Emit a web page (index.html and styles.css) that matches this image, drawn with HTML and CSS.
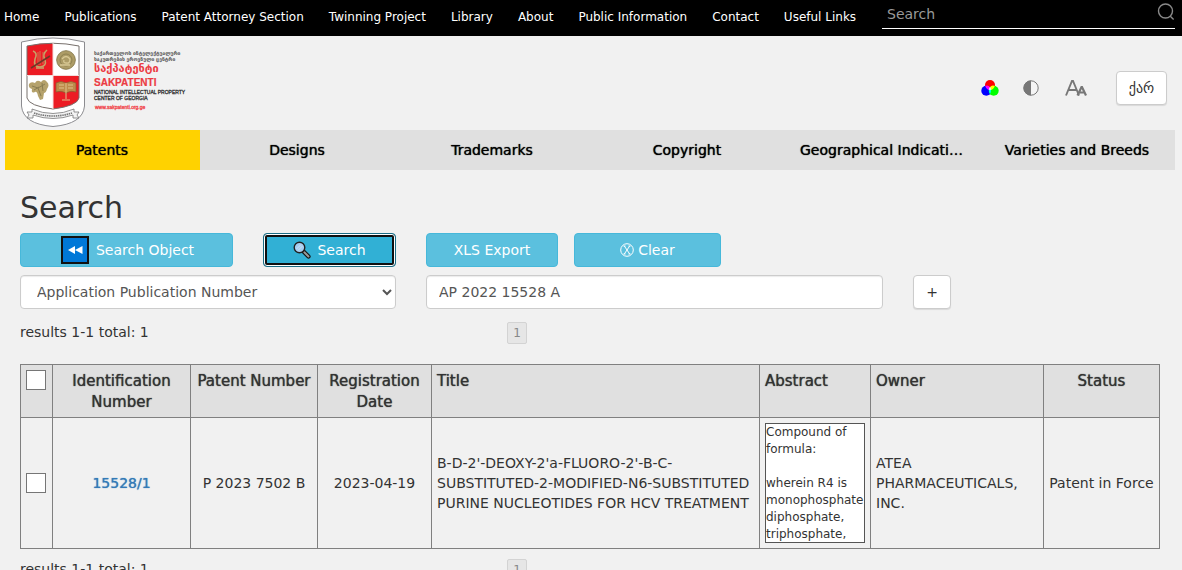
FILE: index.html
```html
<!DOCTYPE html>
<html lang="en">

<head>
    <meta charset="UTF-8">
    <title>Sakpatenti - Search</title>
    <link rel="stylesheet" href="styles.css">
</head>

<body>
    <!-- top menu -->
    <div class="top_bar">
        <nav class="top_menu">
            <a href="#">Home</a>
            <a href="#">Publications</a>
            <a href="#">Patent Attorney Section</a>
            <a href="#">Twinning Project</a>
            <a href="#">Library</a>
            <a href="#">About</a>
            <a href="#">Public Information</a>
            <a href="#">Contact</a>
            <a href="#">Useful Links</a>
        </nav>
        <form class="top_search">
            <input type="text" placeholder="Search" aria-label="Site search">
            <button type="button" aria-label="Go">
                <svg width="18" height="18" viewBox="0 0 18 18" fill="none" stroke="#8a8a8a" stroke-width="1.4">
                    <circle cx="8.5" cy="8" r="7" />
                    <path d="M13.3 13.2L16.6 16.4" />
                </svg>
            </button>
        </form>
    </div>

    <div class="container">
        <!-- logo and tools -->
        <header class="header">
            <a class="logo" href="#" aria-label="Sakpatenti">
                <svg width="180" height="92" viewBox="0 0 180 92">
                    <path d="M1.5 6Q33 -2 64.5 6V70Q63 88 33 90.5Q3 88 1.5 70Z" fill="#fff" stroke="#8c8c90" stroke-width="1" />
                    <path d="M7 10Q20 7 33 7V39.5H7Z" fill="#ec1c24" />
                    <path d="M33 39.5H59V62Q57 70 33 73Z" fill="#ec1c24" />
                    <path d="M7 10Q33 4.5 59 10V62Q57 70 33 73Q9 70 7 62Z" fill="none" stroke="#77706c" stroke-width="1" />
                    <path d="M33 7V73M7 39.5H59" stroke="#f4dddc" stroke-width="1" />
                    <!-- lyre -->
                    <g fill="none" stroke="#c6a267" stroke-width="1.6">
                        <path d="M13 15Q18 17 15 23Q13 31 20 31Q27 30 25 24Q22 18 27 14" />
                        <path d="M18 16V29M20 15V29M23 16V28" stroke-width=".7" />
                        <path d="M16 32H24" />
                        <path d="M11 32L30 20" stroke="#6e3828" stroke-width="1.5" />
                    </g>
                    <!-- coin -->
                    <circle cx="46" cy="24" r="9.3" fill="#ad9c66" stroke="#8d8053" />
                    <circle cx="46" cy="24" r="6" fill="none" stroke="#8f8252" />
                    <path d="M42 23Q46 18 50 23Q50 28 46 27Q43 27 44 24M40 29H50" fill="none" stroke="#d9c995" stroke-width="1.3" />
                    <!-- vine -->
                    <path d="M9 48Q11 45 15 47Q17 43 21 46Q24 42 27 46Q30 49 27 53Q26 57 24 57L23 63L20 64L18 60Q17 55 15 56Q11 58 12 53Q8 52 9 48Z" fill="#b5a26c" />
                    <path d="M12 50L18 52L25 48M18 52L21 60M14 54L19 51M22 47L23 55" fill="none" stroke="#8a7d52" />
                    <!-- book stand -->
                    <path d="M36 47Q41 44 46 47Q51 44 56 47V56Q51 54 46 57Q41 54 36 56Z" fill="#bd8b4b" stroke="#8b5b30" stroke-width=".7" />
                    <path d="M46 47V63M42 64H50M39 49H44M39 52H44M48 49H53M48 52H53" stroke="#dfc28b" fill="none" />
                    <!-- ribbon -->
                    <path d="M7 76L12 76V73Q33 82 54 73V76L59 76L57 79L59 82H53V79Q33 86 13 79V82H7L9 79Z" fill="#f3f3f3" stroke="#777" stroke-width=".8" />
                    <path d="M14 77Q33 83 52 77" fill="none" stroke="#777" stroke-width="1.6" stroke-dasharray="1.5 .7" />
                    <g class="logo_small">
                        <text x="74" y="19">საქართველოს ინტელექტუალური</text>
                        <text x="74" y="25">საკუთრების ეროვნული ცენტრი</text>
                    </g>
                    <text class="logo_geo" x="74" y="36">საქპატენტი</text>
                    <text class="logo_name" x="74" y="50">SAKPATENTI</text>
                    <g class="logo_sub">
                        <text x="74" y="58">NATIONAL INTELLECTUAL PROPERTY</text>
                        <text x="74" y="64">CENTER OF GEORGIA</text>
                    </g>
                    <text class="logo_url" x="75" y="73">www.sakpatenti.org.ge</text>
                </svg>
            </a>
            <div class="tools">
                <button type="button" class="tool" aria-label="Colours">
                    <svg width="18" height="16" viewBox="0 0 18 16">
                        <circle cx="9" cy="5" r="5" fill="#f00" />
                        <circle cx="5.3" cy="10.7" r="5" fill="#00f" />
                        <circle cx="12.7" cy="10.7" r="5" fill="#0f0" />
                        <path d="M4.2 5.9Q7.5 4.8 9 7.3Q10 8.5 8.8 10Q5.2 9.5 4.2 5.9Z" fill="#f0f" />
                        <path d="M13.8 5.9Q10.5 4.8 9 7.3Q8 8.5 9.2 10Q12.8 9.5 13.8 5.9Z" fill="#ff0" />
                        <path d="M9 7.3Q11 10.5 9 14Q7 10.5 9 7.3Z" fill="#0ff" />
                        <path d="M9 7L10.3 9.7H7.7Z" fill="#fff" />
                    </svg>
                </button>
                <button type="button" class="tool" aria-label="Contrast">
                    <svg width="16" height="16" viewBox="0 0 16 16">
                        <circle cx="8" cy="8" r="7.2" fill="#f5f5f5" stroke="#777" />
                        <path d="M8 .5A7.5 7.5 0 0 0 8 15.5Z" fill="#777" />
                    </svg>
                </button>
                <button type="button" class="tool" aria-label="Text size">
                    <svg width="22" height="16" viewBox="0 0 22 16" fill="none" stroke="#777">
                        <path d="M1 15.5L7 1H8L14 15.5M3.5 10H11.5" stroke-width="1.9" />
                        <path d="M12.5 15.5L16.5 7H17L21 15.5M14 12.5H19.5" stroke-width="2.2" />
                    </svg>
                </button>
                <button type="button" class="btn btn_default btn_lang">ქარ</button>
            </div>
        </header>

        <nav class="tabs">
            <a class="active" href="#">Patents</a>
            <a href="#">Designs</a>
            <a href="#">Trademarks</a>
            <a href="#">Copyright</a>
            <a href="#">Geographical Indications</a>
            <a href="#">Varieties and Breeds</a>
        </nav>

        <main class="content">
            <h1>Search</h1>
            <form class="search_form">
                <div class="form_left">
                    <button type="button" class="btn btn_info btn_object">
                        <svg width="28" height="28" viewBox="0 0 28 28">
                            <rect x="1" y="1" width="26" height="26" fill="#0078d7" stroke="#111" stroke-width="2" />
                            <path d="M14 10V18L7 14ZM21.5 10V18L14 14Z" fill="#fff" />
                        </svg>
                        Search Object
                    </button>
                    <button type="button" class="btn btn_info btn_search">
                        <svg width="18" height="18" viewBox="0 0 18 18">
                            <path d="M10 10L15.5 15.5" stroke="#111" stroke-width="4.2" stroke-linecap="round" />
                            <path d="M11.3 11.3L15.5 15.5" stroke="#999" stroke-width="2" stroke-linecap="round" />
                            <circle cx="6.5" cy="6.5" r="5.3" fill="#a6cdf0" stroke="#222" stroke-width="1.4" />
                            <path d="M3.5 8L8 3.5M5 9.5L9.5 5" stroke="#cbe2f7" />
                        </svg>
                        Search
                    </button>
                </div>
                <div class="form_mid">
                    <button type="button" class="btn btn_info btn_xls">XLS Export</button>
                    <button type="button" class="btn btn_info btn_clear">
                        <svg width="14" height="14" viewBox="0 0 14 14" fill="none" stroke="#fff">
                            <circle cx="7" cy="7" r="6.3" />
                            <path d="M4.3 3L9.7 11M9.7 3L4.3 11M3.5 3H5.5M8.5 3H10.5M3.5 11H5.5M8.5 11H10.5" />
                        </svg>
                        Clear
                    </button>
                </div>
                <select class="form_control field" aria-label="Field">
                    <option>Application Publication Number</option>
                </select>
                <input class="form_control" type="text" value="AP 2022 15528 A" aria-label="Value">
                <button type="button" class="btn btn_default btn_add" aria-label="Add">+</button>
            </form>

            <div class="results">
                <span>results 1-1 total: 1</span>
                <button type="button" class="page" disabled>1</button>
            </div>

            <table class="list">
                <colgroup>
                    <col class="c_check">
                    <col class="c_id">
                    <col class="c_number">
                    <col class="c_date">
                    <col class="c_title">
                    <col class="c_abstract">
                    <col class="c_owner">
                    <col class="c_status">
                </colgroup>
                <thead>
                    <tr>
                        <th class="check"><input type="checkbox" aria-label="Select all"></th>
                        <th>Identification Number</th>
                        <th>Patent Number</th>
                        <th>Registration Date</th>
                        <th class="left">Title</th>
                        <th class="left">Abstract</th>
                        <th class="left">Owner</th>
                        <th>Status</th>
                    </tr>
                </thead>
                <tbody>
                    <tr>
                        <td class="check"><input type="checkbox" aria-label="Select 15528/1"></td>
                        <td><a href="#">15528/1</a></td>
                        <td>P 2023 7502 B</td>
                        <td>2023-04-19</td>
                        <td class="left">B-D-2'-DEOXY-2'a-FLUORO-2'-B-C-SUBSTITUTED-2-MODIFIED-N6-SUBSTITUTED PURINE NUCLEOTIDES FOR HCV TREATMENT</td>
                        <td class="left">
                            <div class="abstract">Compound of formula:<br><br>wherein R4 is monophosphate, diphosphate, triphosphate,</div>
                        </td>
                        <td class="left">ATEA PHARMACEUTICALS, INC.</td>
                        <td>Patent in Force</td>
                    </tr>
                </tbody>
            </table>

            <div class="results">
                <span>results 1-1 total: 1</span>
                <button type="button" class="page" disabled>1</button>
            </div>
        </main>
    </div>
</body>

</html>
```
FILE: styles.css
```css
* {
    box-sizing: border-box;
}

html {
    overflow: hidden;
}

body {
    margin: 0;
    font-family: "DejaVu Sans", sans-serif;
    font-size: 14px;
    line-height: 20px;
    color: #333;
    background-color: #f1f1f1;
}

a {
    text-decoration: none;
}

button,
input,
select {
    font-family: inherit;
    font-size: 14px;
}

/*top menu*/

.top_bar {
    display: flex;
    justify-content: space-between;
    height: 36px;
    background-color: #000;
}

.top_menu {
    display: flex;
    gap: 25px;
    padding: 7px 4px;
    white-space: nowrap;
}

.top_menu a {
    font-size: 12px;
    color: #fff;
}

.top_search {
    display: flex;
    align-items: center;
    width: 293px;
    height: 29px;
    margin-right: 7px;
    border-bottom: 1px solid #fff;
}

.top_search input {
    flex: 1;
    min-width: 0;
    padding: 0 5px;
    border: 0;
    color: #999;
    background: none;
}

.top_search input::placeholder {
    color: #999;
}

.top_search button {
    display: flex;
    padding: 0 0 4px;
    border: 0;
    background: none;
}

.container {
    max-width: 1170px;
    margin: 0 7px 0 5px;
}

/*header*/

.header {
    display: flex;
    justify-content: space-between;
    height: 94px;
    padding: 0 8px 0 15px;
}

.tools {
    display: flex;
    align-items: center;
    padding-top: 10px;
}

.tool {
    display: flex;
    margin-right: 24px;
    padding: 0;
    border: 0;
    background: none;
}

.tool:nth-child(2) {
    margin-right: 26px;
}

.tool:nth-child(3) {
    margin-right: 29px;
}

.logo_small {
    font-size: 5px;
    font-weight: bold;
    fill: #555;
}

.logo_geo {
    font-size: 11px;
    font-weight: bold;
    fill: #ec3b42;
}

.logo_name {
    font: bold 10px "Liberation Sans", sans-serif;
    fill: #ec3b42;
    stroke: #ec3b42;
    stroke-width: 0.2;
}

.logo_sub {
    font: 5px "Liberation Sans", sans-serif;
    fill: #333;
    stroke: #333;
    stroke-width: 0.3;
}

.logo_url {
    font: 5px "Liberation Sans", sans-serif;
    fill: #f0444b;
    stroke: #f0444b;
    stroke-width: 0.3;
}

/*tabs*/

.tabs {
    display: grid;
    grid-template-columns: repeat(6, 1fr);
    background-color: #e0e0e0;
}

.tabs a {
    padding: 0 16px 0 15px;
    line-height: 40px;
    text-align: center;
    color: #000;
    text-shadow: 0 0 1px #000;
    white-space: nowrap;
    overflow: hidden;
    text-overflow: ellipsis;
}

.tabs .active {
    background-color: #ffd200;
}

/*search form*/

.content {
    padding: 0 15px;
}

h1 {
    margin: 21px 0 8px;
    font-size: 30px;
    font-weight: normal;
    line-height: 34px;
}

.search_form {
    display: grid;
    grid-template-columns: 376fr 457fr 247fr;
    gap: 8px 30px;
    padding-bottom: 3px;
}

.form_left {
    display: flex;
    justify-content: space-between;
}

.form_mid {
    display: flex;
    grid-column: 2 / 4;
    gap: 16px;
}

.btn {
    display: flex;
    align-items: center;
    justify-content: center;
    gap: 6px;
    height: 34px;
    padding: 0 12px;
    border: 1px solid #ccc;
    border-radius: 4px;
}

.btn_default {
    color: #333;
    background-color: #fff;
    box-shadow: 0 1px 1px rgba(0, 0, 0, 0.1);
}

.btn_info {
    color: #fff;
    border-color: #46b8da;
    background-color: #5bc0de;
}

.btn_object {
    width: 213px;
    gap: 7px;
    padding: 0 10px 0 12px;
}

.btn_search {
    width: 133px;
    border-color: #1b6d85;
    background-color: #31b0d5;
    box-shadow: inset 0 0 0 1px #fff, inset 0 0 0 3px #101010;
}

.btn_xls {
    width: 132px;
}

.btn_clear {
    width: 147px;
    gap: 4px;
}

.btn_add {
    justify-self: start;
    width: 38px;
}

.btn_lang {
    width: 51px;
}

.form_control {
    width: 100%;
    height: 34px;
    padding: 0 12px;
    border: 1px solid #ccc;
    border-radius: 4px;
    color: #555;
    background-color: #fff;
    box-shadow: inset 0 1px 1px rgba(0, 0, 0, 0.08);
}

.field {
    padding: 0 0 0 12px;
}

/*results line*/

.results {
    display: grid;
    grid-template-columns: 487px 1fr;
    align-items: center;
    height: 22px;
    margin: 10px 0 20px;
}

.results span {
    padding-bottom: 2px;
}

.page {
    justify-self: start;
    width: 20px;
    height: 22px;
    padding: 0;
    border: 1px solid #d3d3d3;
    border-radius: 2px;
    font-size: 12px;
    color: #888;
    background-color: #e6e6e6;
}

/*table*/

.list {
    width: 100%;
    table-layout: fixed;
    border-collapse: collapse;
}

.list th,
.list td {
    padding: 5px 4px;
    border: 1px solid #808080;
    text-align: center;
}

.list th {
    padding: 6px 4px 4px;
    font-size: 15px;
    font-weight: normal;
    line-height: 21px;
    vertical-align: top;
    text-shadow: 0 0 1px #333;
    background-color: #e0e0e0;
}

.list .left {
    padding-left: 5px;
    text-align: left;
}

.list .check {
    padding: 5px;
}

.list input {
    display: block;
    appearance: none;
    width: 20px;
    height: 20px;
    margin: 0;
    border: 1px solid #767676;
    background-color: #fff;
}

.list a {
    color: #337ab7;
    text-shadow: 0 0 1px #337ab7;
}

.c_check {
    width: 32px;
}

.c_id {
    width: 138px;
}

.c_number {
    width: 127px;
}

.c_date {
    width: 114px;
}

.c_abstract {
    width: 111px;
}

.c_owner {
    width: 173px;
}

.c_status {
    width: 116px;
}

.abstract {
    width: 100px;
    height: 120px;
    overflow: hidden;
    border: 1px solid #555;
    font-size: 12px;
    line-height: 17px;
    background-color: #fff;
}
```
